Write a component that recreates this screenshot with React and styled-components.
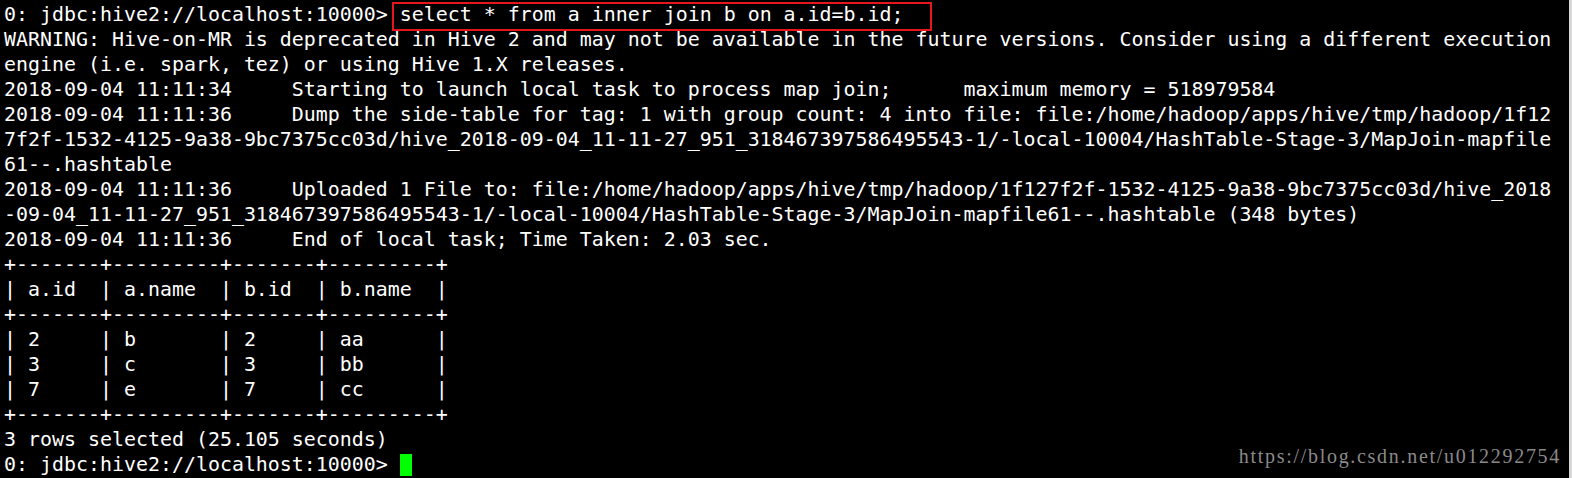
import React from "react";
import styled, { createGlobalStyle } from "styled-components";

const GlobalStyle = createGlobalStyle`
  html, body {
    margin: 0;
    padding: 0;
    background: #000;
  }
`;

const Terminal = styled.div`
  position: relative;
  box-sizing: border-box;
  width: 1572px;
  height: 478px;
  padding: 2px 0 0 4px;
  background: #000;
  color: #fff;
  font-family: "DejaVu Sans Mono", monospace;
  font-size: 19.93px;
  overflow: hidden;
  border-right: 3px solid #d8d8d8;
`;

const Line = styled.div`
  height: 25px;
  line-height: 25px;
  white-space: pre;
`;

const Command = styled.span`
  position: relative;

  &::after {
    content: "";
    position: absolute;
    left: -8px;
    right: -28px;
    top: -1px;
    bottom: -5px;
    border: 2px solid #e8151b;
  }
`;

const Cursor = styled.span`
  display: inline-block;
  width: 12px;
  height: 22px;
  vertical-align: -5px;
  background: #00ff00;
`;

const Watermark = styled.div`
  position: absolute;
  right: 8px;
  bottom: 10px;
  color: #8a8a8a;
  font-family: "Liberation Serif", serif;
  font-size: 20px;
  letter-spacing: 1.7px;
`;

const prompt = "0: jdbc:hive2://localhost:10000> ";
const sep = "+-------+---------+-------+---------+";

const output = [
  "WARNING: Hive-on-MR is deprecated in Hive 2 and may not be available in the future versions. Consider using a different execution",
  "engine (i.e. spark, tez) or using Hive 1.X releases.",
  "2018-09-04 11:11:34     Starting to launch local task to process map join;      maximum memory = 518979584",
  "2018-09-04 11:11:36     Dump the side-table for tag: 1 with group count: 4 into file: file:/home/hadoop/apps/hive/tmp/hadoop/1f12",
  "7f2f-1532-4125-9a38-9bc7375cc03d/hive_2018-09-04_11-11-27_951_318467397586495543-1/-local-10004/HashTable-Stage-3/MapJoin-mapfile",
  "61--.hashtable",
  "2018-09-04 11:11:36     Uploaded 1 File to: file:/home/hadoop/apps/hive/tmp/hadoop/1f127f2f-1532-4125-9a38-9bc7375cc03d/hive_2018",
  "-09-04_11-11-27_951_318467397586495543-1/-local-10004/HashTable-Stage-3/MapJoin-mapfile61--.hashtable (348 bytes)",
  "2018-09-04 11:11:36     End of local task; Time Taken: 2.03 sec.",
  sep,
  "| a.id  | a.name  | b.id  | b.name  |",
  sep,
  "| 2     | b       | 2     | aa      |",
  "| 3     | c       | 3     | bb      |",
  "| 7     | e       | 7     | cc      |",
  sep,
  "3 rows selected (25.105 seconds)",
];

export default function App() {
  return (
    <>
      <GlobalStyle />
      <Terminal>
        <Line>
          {prompt}
          <Command>select * from a inner join b on a.id=b.id;</Command>
        </Line>
        {output.map((text, i) => (
          <Line key={i}>{text}</Line>
        ))}
        <Line>
          {prompt}
          <Cursor />
        </Line>
        <Watermark>https://blog.csdn.net/u012292754</Watermark>
      </Terminal>
    </>
  );
}
